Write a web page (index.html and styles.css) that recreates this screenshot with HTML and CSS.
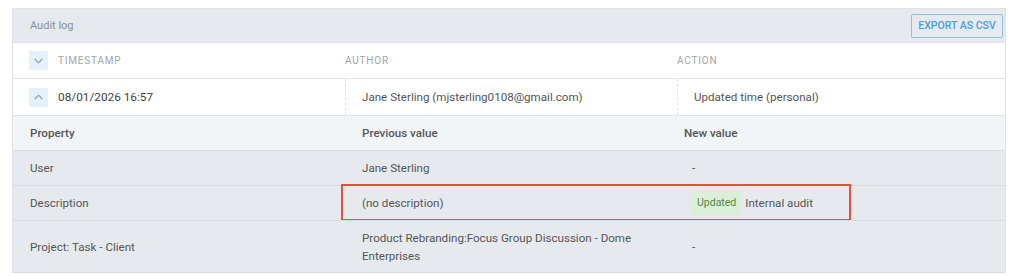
FILE: index.html
```html
<!DOCTYPE html>
<html lang="en">
<head>
  <meta charset="UTF-8">
  <title>Audit log</title>
  <link rel="stylesheet" href="styles.css">
</head>
<body>
  <div class="panel">
    <div class="panel-head">
      <span class="panel-title">Audit log</span>
      <button class="btn-export">EXPORT AS CSV</button>
    </div>

    <div class="log-row log-head">
      <div class="cell first">
        <span class="toggle">
          <svg width="9" height="6" viewBox="0 0 9 6"><path d="M0.8 1 L4.5 4.8 L8.2 1" fill="none" stroke="#8a9aa8" stroke-width="1.1"/></svg>
        </span>
        <span>TIMESTAMP</span>
      </div>
      <div class="cell">AUTHOR</div>
      <div class="cell">ACTION</div>
    </div>

    <div class="log-row log-entry">
      <div class="cell first">
        <span class="toggle">
          <svg width="9" height="6" viewBox="0 0 9 6"><path d="M0.8 5 L4.5 1.2 L8.2 5" fill="none" stroke="#8a9aa8" stroke-width="1.1"/></svg>
        </span>
        <span class="stamp">08/01/2026 16:57</span>
      </div>
      <div class="cell dashed">Jane Sterling (mjsterling0108@gmail.com)</div>
      <div class="cell dashed">Updated time (personal)</div>
    </div>

    <!-- detail of changed properties -->
    <div class="details">
      <div class="detail-row detail-head">
        <div class="dcell">Property</div>
        <div class="dcell">Previous value</div>
        <div class="dcell">New value</div>
      </div>
      <div class="detail-row">
        <div class="dcell">User</div>
        <div class="dcell">Jane Sterling</div>
        <div class="dcell">-</div>
      </div>
      <div class="detail-row">
        <div class="dcell">Description</div>
        <div class="dcell">(no description)</div>
        <div class="dcell"><span class="badge">Updated</span>Internal audit</div>
        <div class="highlight"></div>
      </div>
      <div class="detail-row tall">
        <div class="dcell">Project: Task - Client</div>
        <div class="dcell">Product Rebranding:Focus Group Discussion - Dome Enterprises</div>
        <div class="dcell">-</div>
      </div>
    </div>
  </div>
</body>
</html>
```

FILE: styles.css
```css
* { margin: 0; padding: 0; box-sizing: border-box; }
body {
  background: #fff;
  font-family: Roboto, "Liberation Sans", sans-serif;
  color: #555;
}
.panel {
  margin: 8px 18px 0 12px;
  border: 1px solid #dfe4e9;
  border-bottom: none;
}
.panel-head {
  height: 33px;
  background: #e6eaee;
  display: flex;
  align-items: center;
  justify-content: space-between;
  padding: 0 2px 0 17px;
}
.panel-title { font-size: 11px; color: #8a8f94; }
.btn-export {
  width: 92px;
  height: 24px;
  border: 1px solid #8cc0e6;
  border-radius: 2px;
  background: transparent;
  color: #4a9ee0;
  font-family: inherit;
  font-size: 10.5px;
  font-weight: 500;
}

.log-row {
  display: grid;
  grid-template-columns: 332px 332px 1fr;
  background: #fff;
  border-top: 1px solid #dfe4e9;
}
.log-head { height: 36px; }
.log-entry { height: 37px; }
.cell {
  display: flex;
  align-items: center;
  font-size: 11.6px;
}
.cell.first { padding-left: 16px; gap: 10px; }
.log-head .cell {
  font-size: 10px;
  letter-spacing: 0.8px;
  color: #a0a4a8;
}
.cell.dashed {
  padding-left: 16px;
  border-left: 1px dashed #e2e6ea;
}
.stamp { font-size: 11.8px; color: #3f3f3f; }
.toggle {
  width: 19px;
  height: 19px;
  background: #e3f1fc;
  border-radius: 1px;
  display: flex;
  align-items: center;
  justify-content: center;
}

.details { border-bottom: 1px solid #d8dde2; }
.detail-row {
  position: relative;
  display: grid;
  grid-template-columns: 332px 332px 1fr;
  height: 35px;
  background: #e6eaee;
  border-top: 1px solid #d8dde2;
  font-size: 11.6px;
}
.detail-head { background: #f2f5f8; font-weight: 500; border-top-color: #dfe4e9; }
.detail-row.tall { height: 52px; }
.dcell {
  display: flex;
  align-items: center;
  padding: 0 16px 0 17px;
  line-height: 18px;
}
.detail-row .dcell:nth-child(3) { padding-left: 15px; }
.detail-head .dcell:nth-child(3) { padding-left: 7px; }
.badge {
  background: #dcefd8;
  color: #4d8a4b;
  font-size: 10.5px;
  padding: 3px 5px;
  margin-right: 4px;
  border-radius: 1px;
}
/* red marker round the changed value */
.highlight {
  position: absolute;
  left: 328px;
  top: -2px;
  width: 510px;
  height: 37px;
  border: 2px solid #e4513d;
  pointer-events: none;
}
```
